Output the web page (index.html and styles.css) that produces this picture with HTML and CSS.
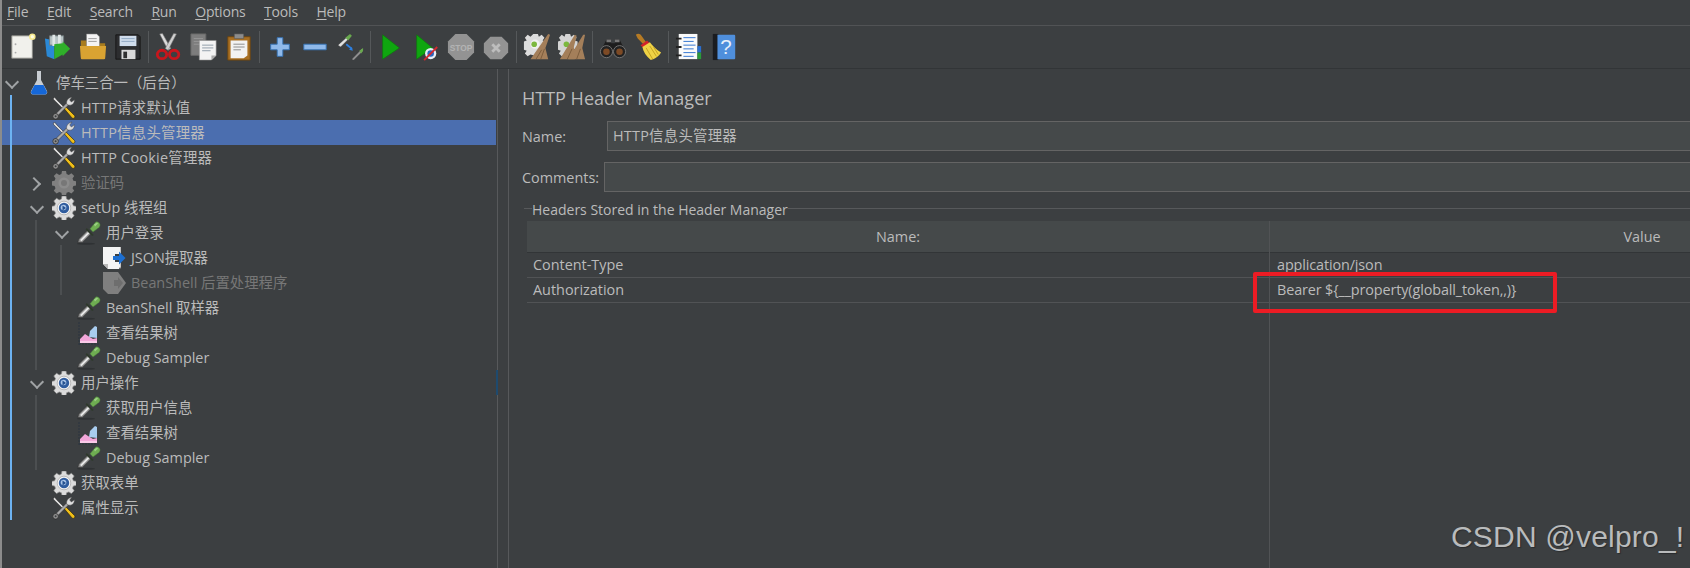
FILE: index.html
```html
<!DOCTYPE html>
<html lang="zh">
<head>
<meta charset="utf-8">
<title>Apache JMeter</title>
<link rel="stylesheet" href="styles.css">
</head>
<body>
<svg class="defs" aria-hidden="true">
  <defs>
    <symbol id="i-tools" viewBox="0 0 24 24">
      <path d="M2.500 1l2.500 3 7.500 7.500-1.500 1.500L3.500 5.500 1 3z" fill="#d9d9d9" stroke="#1f1f1f" stroke-width=".5"/>
      <path d="M12 12.500l1.800-1.800 8.700 8.800c.7.800.4 1.800-.2 2.400-.7.600-1.700.7-2.300 0z" fill="#f0bf18" stroke="#1d1a10" stroke-width=".6"/>
      <path d="M3 18.500L14.500 7l2 2L5 20.500z" fill="#a9a9a9" stroke="#262626" stroke-width=".5"/>
      <circle cx="3.600" cy="20.300" r="2.800" fill="#8e8e8e" stroke="#262626" stroke-width=".7"/>
      <circle cx="3.600" cy="20.300" r="1" fill="#3c3f41"/>
      <path d="M15 8.500c-1.300-3 .5-6.500 5-7.500l-2.300 3 1.700 2 3-2.300c.3 3.800-3 7-7.400 4.800z" fill="#dedede" stroke="#444" stroke-width=".5"/>
    </symbol>
    <symbol id="i-gear" viewBox="0 0 24 24">
      <path d="M10 .5h4l.6 3 2.200.9 2.600-1.700 2.800 2.800-1.700 2.600.9 2.200 3 .6v4l-3 .6-.9 2.200 1.700 2.600-2.800 2.800-2.600-1.700-2.200.9-.6 3h-4l-.6-3-2.200-.9-2.600 1.700-2.800-2.800 1.700-2.600-.9-2.200-3-.6v-4l3-.6.9-2.200-1.700-2.600 2.800-2.800 2.600 1.700 2.200-.9z" fill="#dcdcdc" stroke="#8b8b8b" stroke-width=".7" transform="translate(0 -.5)"/>
      <circle cx="12" cy="12" r="6.800" fill="#f4f4f4" stroke="#9a9a9a" stroke-width=".6"/>
      <circle cx="12" cy="12" r="5.200" fill="#2f5c9e"/>
      <circle cx="11.500" cy="11.500" r="2.800" fill="#a9c4e6"/>
      <path d="M10.500 9.500l3.500 2.500-3.500 2.500z" fill="#24508f"/>
    </symbol>
    <symbol id="i-gear-off" viewBox="0 0 24 24">
      <path d="M10 .5h4l.6 3 2.200.9 2.600-1.700 2.800 2.800-1.700 2.600.9 2.200 3 .6v4l-3 .6-.9 2.200 1.700 2.600-2.800 2.800-2.600-1.700-2.200.9-.6 3h-4l-.6-3-2.200-.9-2.600 1.700-2.800-2.800 1.700-2.600-.9-2.200-3-.6v-4l3-.6.9-2.200-1.700-2.600 2.800-2.800 2.600 1.700 2.200-.9z" fill="#808080" transform="translate(0 -.5)"/>
      <circle cx="12" cy="12" r="5.500" fill="#8c8c8c"/>
      <circle cx="12" cy="12" r="3" fill="#777"/>
    </symbol>
    <symbol id="i-pipette" viewBox="0 0 24 24">
      <ellipse cx="9" cy="22.700" rx="9" ry="1" fill="#2f3234"/>
      <path d="M.8 21.500l1-3.500 9-9 3.500 3.500-9 9z" fill="#8a8a8a" stroke="#2e2e2e" stroke-width=".5"/>
      <path d="M3 19l8-8 1.500 1.200-8 8z" fill="#e9e9e9"/>
      <path d="M9.800 7l7 7-1.700 1-6.500-6.500z" fill="#2f3a2c"/>
      <path d="M13 7.800l5.500-6.600c1.700-1 4 .1 4.500 2.300.2 1-.1 2-.8 2.700L16 11z" fill="#6fae52" stroke="#47793a" stroke-width=".5"/>
      <path d="M17 3.500l3-2 1 1-3 3z" fill="#9ccf85"/>
    </symbol>
    <symbol id="i-graph" viewBox="0 0 24 24">
      <path d="M2 1v23M2 23h21" stroke="#2b3440" stroke-width="1" fill="none" stroke-dasharray="2 1"/>
      <path d="M3 22v-4l5-5 3 2 5 3 4-1v5z" fill="#f3a7da"/>
      <path d="M12 16l1-6 5-5 2 1v11z" fill="#a9cdf0"/>
      <path d="M3 22v-2h17v2z" fill="#f9c9e8"/>
    </symbol>
    <symbol id="i-extract" viewBox="0 0 24 24">
      <path d="M1 1h17v7h-5v8h5v5l-1 2H6l-5-5z" fill="#f4f4f4"/>
      <path d="M1 18l5 5v-5z" fill="#b8b8b8"/>
      <path d="M18 1l1 0v7h-1zM18 16h1v5l-1 2z" fill="#c4c4c4"/>
      <path d="M11 10h6V5.500l6.500 6.500-6.500 6.500V14h-6z" fill="#1d6fd1"/>
    </symbol>
    <symbol id="i-extract-off" viewBox="0 0 24 24">
      <path d="M1 1h15l8 11-8 11H6l-5-5z" fill="#7f7f7f"/>
      <path d="M12 9h4V6l5 6-5 6v-3h-4z" fill="#6e6e6e"/>
    </symbol>
    <symbol id="i-flask" viewBox="0 0 24 24">
      <path d="M10 0h4v9l6 11c.8 2-.3 3.500-2 3.500H6c-1.700 0-2.800-1.500-2-3.500l6-11z" fill="#c8cdd2"/>
      <path d="M7.500 14h9l3.300 6.500c.5 1.600-.5 3-1.800 3H6c-1.300 0-2.300-1.400-1.800-3z" fill="#1567d8"/>
    </symbol>
    <symbol id="t-new" viewBox="0 0 30 30">
      <path d="M3 3h22v24H3z" fill="#f1f1ec" stroke="#8d8d88"/>
      <circle cx="7" cy="12" r="1" fill="#aaa"/><circle cx="7" cy="21" r="1" fill="#aaa"/>
      <circle cx="25" cy="4" r="3.500" fill="#f6e98e"/><circle cx="25" cy="4" r="1.800" fill="#fffde0"/>
    </symbol>
    <symbol id="t-templ" viewBox="0 0 30 30">
      <path d="M1 6l10 2v20L3 25z" fill="#2a89d6"/>
      <path d="M6 3h15v10H6z" fill="#b7c3c4" stroke="#6f7a7c"/>
      <path d="M9 2h3v12H9zM15 2h3v12h-3z" fill="#dfe6e6"/>
      <path d="M11 12l9-1 0-2 8 8-8 8 0-2-9 5z" fill="#2fb02a"/>
    </symbol>
    <symbol id="t-open" viewBox="0 0 30 30">
      <path d="M2 8h9l2 3h15v15H2z" fill="#a87c1e"/>
      <path d="M8 1h11l3 3v11H8z" fill="#f4f4f4" stroke="#777" stroke-width=".6"/>
      <path d="M10 6h9M10 9h9" stroke="#9a9a9a"/>
      <path d="M1 14h28l-1 13c0 .6-.5 1-1 1H3c-.6 0-1-.4-1-1z" fill="#d9a332"/>
    </symbol>
    <symbol id="t-save" viewBox="0 0 30 30">
      <path d="M2 2h24l2 2v24H2z" fill="#2c2d2f" stroke="#151515"/>
      <path d="M6 3h18v11H6z" fill="#cfdcec"/>
      <path d="M8 6h14M8 9h14" stroke="#8fa7c2"/>
      <path d="M8 18h15v10H8z" fill="#d9d9d9"/>
      <path d="M10 20h4v7h-4z" fill="#303030"/>
    </symbol>
    <symbol id="t-cut" viewBox="0 0 30 30">
      <path d="M5 1l3-.5 9 16-3 2z" fill="#dadada" stroke="#777" stroke-width=".6"/>
      <path d="M23 1l-3-.5-9 16 3 2z" fill="#cfcfcf" stroke="#777" stroke-width=".6"/>
      <ellipse cx="7.500" cy="23" rx="5" ry="4.500" fill="none" stroke="#c8161c" stroke-width="3"/>
      <ellipse cx="20.500" cy="23" rx="5" ry="4.500" fill="none" stroke="#c8161c" stroke-width="3"/>
    </symbol>
    <symbol id="t-copy" viewBox="0 0 30 30">
      <path d="M1 1h16v23H1z" fill="#7d7d7d" stroke="#666"/>
      <path d="M4 6h10M4 9h10M4 12h10" stroke="#999"/>
      <path d="M10 8h18v16l-5 5H10z" fill="#f3f3f3" stroke="#888" stroke-width=".6"/>
      <path d="M13 13h12M13 16h12M13 19h9" stroke="#8c9aa6"/>
      <path d="M23 29v-5h5z" fill="#aaa"/>
    </symbol>
    <symbol id="t-paste" viewBox="0 0 30 30">
      <path d="M3 4h24v25H3z" fill="#a86f22" stroke="#6e4510"/>
      <path d="M10 1h10v5H10z" fill="#8c8c8c" stroke="#555" stroke-width=".6"/>
      <path d="M6 8h18v16l-4 3H6z" fill="#f2f2f2"/>
      <path d="M9 12h12M9 15h12M9 18h8" stroke="#888"/>
    </symbol>
    <symbol id="t-plus" viewBox="0 0 30 30">
      <path d="M12 5h6v7h7v6h-7v7h-6v-7H5v-6h7z" fill="#8fb9ea" stroke="#3572b5"/>
    </symbol>
    <symbol id="t-minus" viewBox="0 0 30 30">
      <path d="M3 12h24v6H3z" fill="#8fb9ea" stroke="#3572b5"/>
    </symbol>
    <symbol id="t-toggle" viewBox="0 0 30 30">
      <path d="M2 13l10-9 2 2L5 15z" fill="#e1e1e1" stroke="#333" stroke-width=".5"/>
      <path d="M10 5l5-4 2 2-4 5z" fill="#69a94e"/>
      <path d="M11 12l6 5" stroke="#2d7fe0" stroke-width="2"/><path d="M18 19l-4-1 3-3z" fill="#2d7fe0"/>
      <path d="M17 28l11-11 1 2-10 10z" fill="#8f8f8f"/><path d="M25 19l4-3v3l-2 3z" fill="#69a94e"/>
    </symbol>
    <symbol id="t-start" viewBox="0 0 30 30">
      <path d="M6 2l18 14-18 12z" fill="#0fa60f" stroke="#0a7a0a" stroke-width=".7"/>
    </symbol>
    <symbol id="t-startno" viewBox="0 0 30 30">
      <path d="M5 2l17 14-17 12z" fill="#0fa60f" stroke="#0a7a0a" stroke-width=".7"/>
      <circle cx="20" cy="22" r="6" fill="#e8eef6"/>
      <circle cx="20" cy="22" r="3.500" fill="#2c66c0"/>
      <path d="M13 29l14-14" stroke="#d3282e" stroke-width="2"/>
    </symbol>
    <symbol id="t-stop" viewBox="0 0 30 30">
      <path d="M9 1h12l8 8v12l-8 8H9l-8-8V9z" fill="#939393"/>
      <text x="15" y="19" text-anchor="middle" class="stoptext">STOP</text>
    </symbol>
    <symbol id="t-shut" viewBox="0 0 30 30">
      <path d="M9 4h12l7 7v10l-7 7H9l-7-7V11z" fill="#939393"/>
      <path d="M11 12l8 8M19 12l-8 8" stroke="#bdbdbd" stroke-width="3"/>
    </symbol>
    <symbol id="t-clear" viewBox="0 0 30 30">
      <path d="M11 1h5l1 3 3-2 3 3-2 3 3 1v5l-12 10-4-1-3 2-3-3 2-3-3-1V9l3-1-2-3 3-3 3 2z" fill="#dcdcdc"/>
      <circle cx="13" cy="12" r="5" fill="#f0f0f0"/><circle cx="12" cy="12" r="3" fill="#7cb83e"/>
      <path d="M27 1l2 1-5 14 3 12H8z" fill="#a47f5a"/>
      <path d="M14 28l6-10M19 28l4-11" stroke="#7a5a3a"/>
    </symbol>
    <symbol id="t-clearall" viewBox="0 0 30 30">
      <path d="M8 1h5l1 3 3-2 3 3-2 3 3 1v5l-10 10-4-1-3 2-3-3 2-3-3-1V9l3-1-2-3 3-3 3 2z" fill="#d4d4d4"/>
      <circle cx="9" cy="12" r="3" fill="#7cb83e"/>
      <path d="M18 2l2 1-3 12 1 13H2z" fill="#a47f5a"/><path d="M27 2l2 0-3 14 3 12H11z" fill="#a47f5a"/>
      <path d="M10 28l5-11M20 28l4-11" stroke="#7a5a3a"/>
    </symbol>
    <symbol id="t-find" viewBox="0 0 30 30">
      <path d="M8 7h5v4h4V7h5l6 12H2z" fill="#1d1d1d"/>
      <path d="M8 7h5v3H8zM17 7h5v3h-5z" fill="#777"/>
      <circle cx="8" cy="20" r="6.500" fill="#222" stroke="#777"/><circle cx="22" cy="20" r="6.500" fill="#222" stroke="#777"/>
      <circle cx="8" cy="20" r="3.500" fill="#7d4a25"/><circle cx="22" cy="20" r="3.500" fill="#7d4a25"/>
    </symbol>
    <symbol id="t-broom" viewBox="0 0 30 30">
      <path d="M2 2c2-2 5-1 6 1l5 7-3 2-6-6z" fill="#b67b24"/>
      <path d="M7 13l7-5 3 3-7 5z" fill="#d2232a"/>
      <path d="M9 15l8-5c3 4 7 8 12 11-2 4-7 7-11 8-5-4-8-9-9-14z" fill="#efd245"/>
      <path d="M13 16l7 12M17 14l7 11M21 15l5 8" stroke="#c29f1f"/>
    </symbol>
    <symbol id="t-log" viewBox="0 0 30 30">
      <path d="M4 1h20v27H4z" fill="#fafafa"/>
      <path d="M9 5h13M9 9h11M9 13h13M9 17h11M9 21h13M9 25h11" stroke="#2a6fcf"/>
      <path d="M1 6h6M1 15h6M1 24h6" stroke="#222" stroke-width="2"/>
      <path d="M24 14h4v7h-4z" fill="#2a6fcf"/><path d="M24 21h4v7h-4z" fill="#2a9a3a"/>
    </symbol>
    <symbol id="t-help" viewBox="0 0 30 30">
      <path d="M3 1h6v28H3z" fill="#1a1c20"/>
      <path d="M8 2h18c.6 0 1 .4 1 1v24c0 .6-.4 1-1 1H8z" fill="#4f8fdc"/>
      <text x="17" y="23" text-anchor="middle" class="helptext">?</text>
    </symbol>
  </defs>
</svg>

<header class="menubar">
  <span class="menu"><u>F</u>ile</span>
  <span class="menu"><u>E</u>dit</span>
  <span class="menu"><u>S</u>earch</span>
  <span class="menu"><u>R</u>un</span>
  <span class="menu"><u>O</u>ptions</span>
  <span class="menu"><u>T</u>ools</span>
  <span class="menu"><u>H</u>elp</span>
</header>

<nav class="toolbar">
  <span class="tool"><svg class="ti"><use href="#t-new"/></svg></span>
  <span class="tool"><svg class="ti"><use href="#t-templ"/></svg></span>
  <span class="tool"><svg class="ti"><use href="#t-open"/></svg></span>
  <span class="tool"><svg class="ti"><use href="#t-save"/></svg></span>
  <span class="sep"></span>
  <span class="tool"><svg class="ti"><use href="#t-cut"/></svg></span>
  <span class="tool"><svg class="ti"><use href="#t-copy"/></svg></span>
  <span class="tool"><svg class="ti"><use href="#t-paste"/></svg></span>
  <span class="sep"></span>
  <span class="tool"><svg class="ti"><use href="#t-plus"/></svg></span>
  <span class="tool"><svg class="ti"><use href="#t-minus"/></svg></span>
  <span class="tool"><svg class="ti"><use href="#t-toggle"/></svg></span>
  <span class="sep"></span>
  <span class="tool"><svg class="ti"><use href="#t-start"/></svg></span>
  <span class="tool"><svg class="ti"><use href="#t-startno"/></svg></span>
  <span class="tool"><svg class="ti"><use href="#t-stop"/></svg></span>
  <span class="tool"><svg class="ti"><use href="#t-shut"/></svg></span>
  <span class="sep"></span>
  <span class="tool"><svg class="ti"><use href="#t-clear"/></svg></span>
  <span class="tool"><svg class="ti"><use href="#t-clearall"/></svg></span>
  <span class="sep"></span>
  <span class="tool"><svg class="ti"><use href="#t-find"/></svg></span>
  <span class="tool"><svg class="ti"><use href="#t-broom"/></svg></span>
  <span class="sep"></span>
  <span class="tool"><svg class="ti"><use href="#t-log"/></svg></span>
  <span class="tool"><svg class="ti"><use href="#t-help"/></svg></span>
</nav>

<main class="main">
  <aside class="tree">
    <div class="row"><span class="arrow down"></span><svg class="ni"><use href="#i-flask"/></svg><span>停车三合一（后台）</span></div>
    <div class="kids root-kids">
      <div class="row sp"><span class="arrow"></span><svg class="ni"><use href="#i-tools"/></svg><span>HTTP请求默认值</span></div>
      <div class="row sp sel"><span class="arrow"></span><svg class="ni"><use href="#i-tools"/></svg><span>HTTP信息头管理器</span></div>
      <div class="row sp"><span class="arrow"></span><svg class="ni"><use href="#i-tools"/></svg><span>HTTP Cookie管理器</span></div>
      <div class="row off"><span class="arrow right"></span><svg class="ni"><use href="#i-gear-off"/></svg><span>验证码</span></div>
      <div class="row"><span class="arrow down"></span><svg class="ni"><use href="#i-gear"/></svg><span>setUp 线程组</span></div>
      <div class="kids">
        <div class="row"><span class="arrow down"></span><svg class="ni"><use href="#i-pipette"/></svg><span>用户登录</span></div>
        <div class="kids">
          <div class="row"><span class="arrow"></span><svg class="ni"><use href="#i-extract"/></svg><span>JSON提取器</span></div>
          <div class="row off"><span class="arrow"></span><svg class="ni"><use href="#i-extract-off"/></svg><span>BeanShell 后置处理程序</span></div>
        </div>
        <div class="row"><span class="arrow"></span><svg class="ni"><use href="#i-pipette"/></svg><span>BeanShell 取样器</span></div>
        <div class="row"><span class="arrow"></span><svg class="ni"><use href="#i-graph"/></svg><span>查看结果树</span></div>
        <div class="row"><span class="arrow"></span><svg class="ni"><use href="#i-pipette"/></svg><span>Debug Sampler</span></div>
      </div>
      <div class="row"><span class="arrow down"></span><svg class="ni"><use href="#i-gear"/></svg><span>用户操作</span></div>
      <div class="kids">
        <div class="row"><span class="arrow"></span><svg class="ni"><use href="#i-pipette"/></svg><span>获取用户信息</span></div>
        <div class="row"><span class="arrow"></span><svg class="ni"><use href="#i-graph"/></svg><span>查看结果树</span></div>
        <div class="row"><span class="arrow"></span><svg class="ni"><use href="#i-pipette"/></svg><span>Debug Sampler</span></div>
      </div>
      <div class="row"><span class="arrow"></span><svg class="ni"><use href="#i-gear"/></svg><span>获取表单</span></div>
      <div class="row"><span class="arrow"></span><svg class="ni"><use href="#i-tools"/></svg><span>属性显示</span></div>
    </div>
    <span class="thumb"></span>
  </aside>

  <section class="panel">
    <h1 class="title">HTTP Header Manager</h1>
    <div class="field field-name"><label>Name:</label><div class="input">HTTP信息头管理器</div></div>
    <div class="field field-comments"><label>Comments:</label><div class="input"></div></div>
    <div class="legend"><span>Headers Stored in the Header Manager</span></div>
    <div class="table">
      <div class="cell head">Name:</div><div class="cell head">Value</div>
      <div class="cell">Content-Type</div><div class="cell val">application/json</div>
      <div class="cell">Authorization</div><div class="cell val">Bearer ${__property(globall_token,,)}</div>
    </div>
  </section>
</main>

<div class="redbox"></div>
<div class="watermark">CSDN @velpro_!</div>
</body>
</html>
```

FILE: styles.css
```css
* { box-sizing: border-box; }
html, body { margin: 0; height: 100%; }
body {
  width: 1690px;
  height: 568px;
  overflow: hidden;
  position: relative;
  display: flex;
  flex-direction: column;
  background: #3c3f41;
  color: #bbbbbb;
  font: 14.4px/20px "Open Sans", "Noto Sans CJK SC", sans-serif;
  border-left: 2px solid #8c8c8c;
}
.defs { position: absolute; width: 0; height: 0; }

.menubar {
  height: 26px;
  flex: none;
  display: flex;
  gap: 18.6px;
  align-items: center;
  padding: 0 0 2px 5px;
  border-bottom: 1px solid #515355;
  font-size: 14px;
  letter-spacing: -.2px;
}
.menu u { text-underline-offset: 2px; }

.toolbar {
  height: 43px;
  flex: none;
  display: flex;
  align-items: center;
  padding-left: 3.5px;
  border-bottom: 1px solid #323537;
}
.tool { width: 35px; height: 32px; display: flex; justify-content: center; align-items: center; }
.ti { width: 28px; height: 28px; }
.sep { width: 1px; height: 32px; margin: 0 2.5px; background: #55585a; }

.main { flex: 1; display: flex; min-height: 0; }

.tree {
  position: relative;
  isolation: isolate;
  width: 496px;
  flex: none;
  padding-top: 1px;
  border-right: 1px solid #57595b;
}
.row {
  position: relative;
  height: 25px;
  display: flex;
  align-items: center;
  padding-left: 1px;
  white-space: nowrap;
}
.row > span:last-child { padding-top: 1px; }
.sp { letter-spacing: .25px; }
.kids .row { padding-left: 16px; }
.kids > .kids { margin-left: 23px; border-left: 2px solid #4c4f51; }
.root-kids { margin-left: 8px; border-left: 2px solid #6db3f2; }
.row.sel::before {
  content: "";
  position: absolute;
  z-index: -1;
  inset: 0 auto 0 -10px;
  width: 494px;
  background: #4b6eaf;
}
.off { color: #777777; }
.arrow { position: relative; width: 18px; height: 18px; flex: none; }
.arrow.down::after, .arrow.right::after {
  content: "";
  position: absolute;
  left: 4px;
  top: 3px;
  width: 8px;
  height: 8px;
  border: solid #a0a3a5;
  border-width: 0 2.5px 2.5px 0;
  transform: rotate(45deg);
}
.arrow.right::after { left: 1px; top: 5px; transform: rotate(-45deg); }
.ni { width: 24px; height: 24px; margin: 0 5px 0 6px; flex: none; }
.thumb {
  position: absolute;
  right: -1px;
  top: 301px;
  width: 2px;
  height: 25px;
  background: #1e4a6e;
}

.panel {
  flex: 1;
  min-width: 0;
  margin-left: 10px;
  padding: 17px 0 0 13px;
  border-left: 1px solid #57595b;
  display: flex;
  flex-direction: column;
  overflow: hidden;
}
.title {
  margin: 0;
  font-size: 18px;
  font-weight: 400;
  line-height: 24px;
  height: 24px;
}
.field { display: flex; align-items: center; height: 30px; margin-top: 11px; margin-right: -4px; }
.field label { flex: none; padding-top: 2px; }
.field-name label { width: 85px; }
.field-comments label { width: 82px; }
.input {
  flex: 1;
  height: 30px;
  padding: 2px 5px;
  background: #45494a;
  border: 1px solid #646464;
  line-height: 24px;
  letter-spacing: .25px;
}
.legend {
  position: relative;
  height: 20px;
  margin-top: 9px;
  padding-left: 10px;
  font-size: 14px;
  line-height: 18px;
}
.legend::before {
  content: "";
  position: absolute;
  left: 2px;
  right: 0;
  top: 7px;
  height: 1px;
  background: #57595b;
}
.legend span { position: relative; background: #3c3f41; }
.table {
  position: relative;
  flex: 1;
  width: 1488px;
  margin-left: 5px;
  display: grid;
  grid-template-columns: 742px 746px;
  grid-auto-rows: 25px;
  grid-template-rows: 32px;
  align-content: start;
}
.table::after {
  content: "";
  position: absolute;
  left: 742px;
  top: 0;
  bottom: 0;
  width: 1px;
  background: #515355;
}
.cell {
  padding: 0 6px;
  line-height: 24px;
  border-bottom: 1px solid #515355;
  white-space: nowrap;
}
.val { padding-left: 8px; letter-spacing: -.12px; }
.head {
  text-align: center;
  line-height: 31px;
  background: #45494a;
  border-bottom: 1px solid #323537;
}
.stoptext { font: 700 9px "Liberation Sans", sans-serif; fill: #b3b3b3; }
.helptext { font: 400 22px "Liberation Sans", sans-serif; fill: #e8f0fa; }

.redbox {
  position: absolute;
  left: 1251px;
  top: 272px;
  width: 304px;
  height: 41px;
  border: 4px solid #ed1c24;
  border-radius: 2px;
}
.watermark {
  position: absolute;
  left: 1449px;
  top: 520px;
  font: 30px/34px "Liberation Sans", sans-serif;
  letter-spacing: .2px;
  color: #b9bbbc;
  text-shadow: 1px 1px 1px #2a2c2e;
  white-space: nowrap;
}
```
